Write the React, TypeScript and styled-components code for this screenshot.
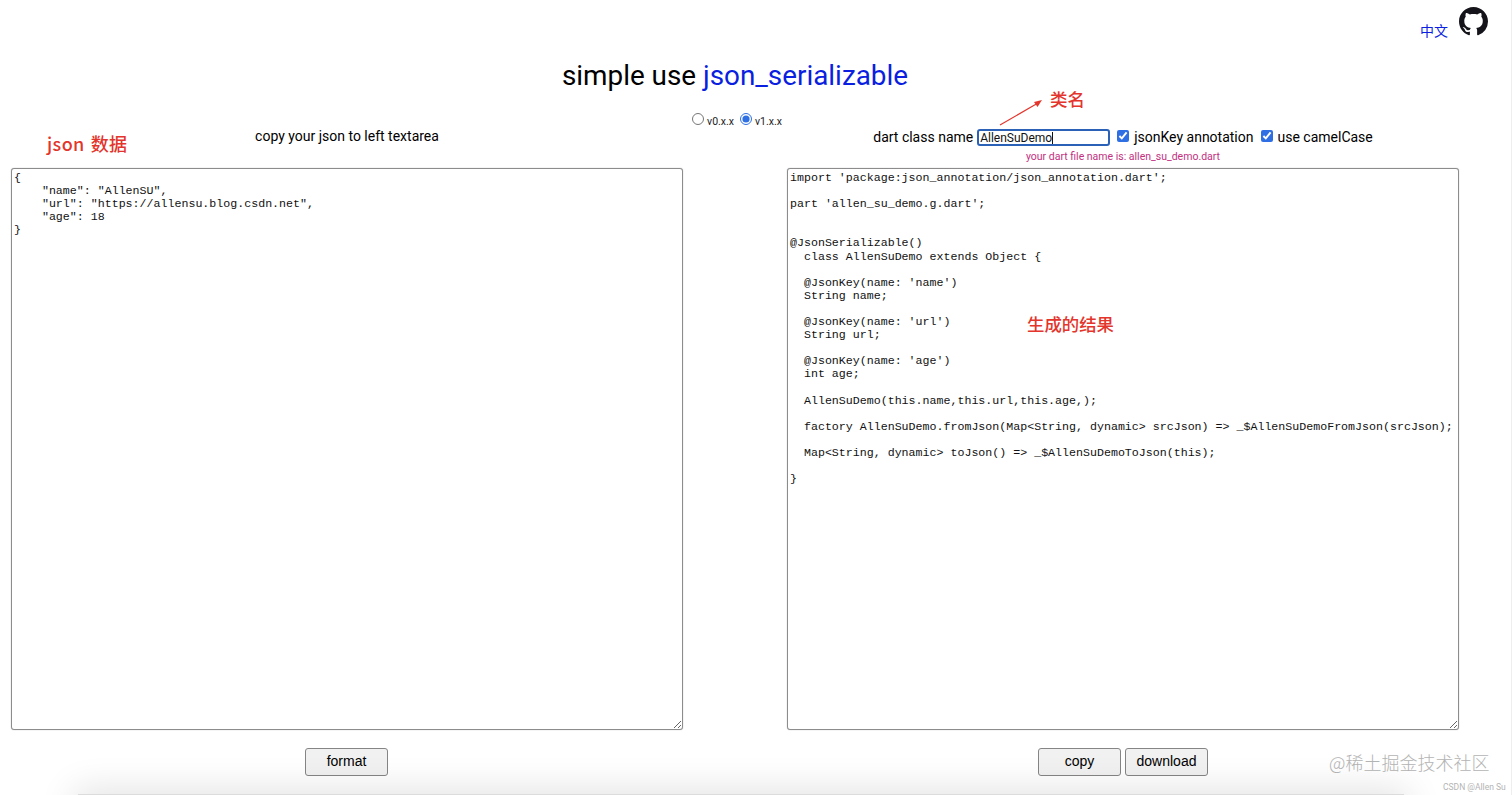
import React from "react";
import styled, { createGlobalStyle } from "styled-components";

const Global = createGlobalStyle`
  html, body { margin: 0; padding: 0; background: #fff; }
  body { font-family: Roboto, "Liberation Sans", sans-serif; color: #000; }
`;

const Page = styled.div`
  position: relative;
  width: 1512px;
  height: 795px;
  box-sizing: border-box;
  border-right: 1px solid #eeeeee;
  overflow: hidden;
`;

const TopBar = styled.div`
  display: flex;
  justify-content: flex-end;
  align-items: flex-end;
  gap: 11px;
  height: 36px;
  padding: 7px 23px 0 0;
  box-sizing: border-box;
`;

const LangLink = styled.a`
  font-size: 14px;
  line-height: 16px;
  color: #0a1fe0;
  text-decoration: none;
  font-family: "Noto Sans CJK SC", Roboto, sans-serif;
  margin-bottom: -2px;
`;

const GithubMark = styled.svg`
  width: 29px;
  height: 29px;
  fill: #14141a;
  display: block;
`;

const Main = styled.div`
  width: 1470px;
`;

const Title = styled.h1`
  margin: 23px 0 0;
  height: 34px;
  font-size: 27.85px;
  line-height: 34px;
  font-weight: 400;
  text-align: center;
`;

const TitleLink = styled.a`
  color: #0a1fe0;
  text-decoration: none;
`;

const VersionRow = styled.div`
  display: flex;
  justify-content: center;
  align-items: center;
  gap: 6px;
  height: 14px;
  margin-top: 20px;
  padding-left: 4px;
  font-size: 10.5px;
  color: #222;
`;

const VersionLabel = styled.label`
  display: flex;
  align-items: center;
  gap: 3px;
  padding-top: 2px;
`;

const Radio = styled.input`
  margin: 0 0 4px;
  width: 12px;
  height: 12px;
  accent-color: #2f6fe4;
`;

const Columns = styled.div`
  display: flex;
  gap: 104px;
  padding-left: 11px;
  margin-top: 2px;
`;

const Column = styled.section`
  display: flex;
  flex-direction: column;
  width: 672px;
`;

const ColumnHead = styled.div<{ $raised?: boolean }>`
  display: flex;
  justify-content: center;
  align-items: center;
  box-sizing: border-box;
  height: 17px;
  padding-bottom: ${(p) => (p.$raised ? "2px" : "0")};
  white-space: nowrap;
  font-size: 14px;
  line-height: 17px;
`;

const Hint = styled.div`
  height: 22px;
  font-size: 10.5px;
  line-height: 22px;
  text-align: center;
  color: #c2307f;
`;

const InputWrap = styled.span`
  position: relative;
  display: block;
  margin: 0 7px 0 4px;
`;

const ClassInput = styled.input`
  display: block;
  box-sizing: border-box;
  width: 133px;
  height: 17px;
  padding: 0 1px;
  border: 2px solid #2b62b8;
  border-radius: 3px;
  outline: none;
  font: 400 12px Roboto, sans-serif;
  color: #111;
`;

const Caret = styled.span`
  position: absolute;
  left: 75px;
  top: 3px;
  width: 1px;
  height: 12px;
  background: #111;
`;

const Check = styled.input`
  width: 12px;
  height: 12px;
  margin: 0 5px 3px 0;
  accent-color: #2f6fe4;
`;

const CheckLabel = styled.label`
  display: flex;
  align-items: center;
  margin-right: 7px;
  &:last-child { margin-right: 0; }
`;

const Code = styled.textarea`
  box-sizing: border-box;
  width: 672px;
  height: 562px;
  padding: 2px;
  border: 1px solid #8c8c8c;
  border-radius: 3px;
  box-shadow: 0 0 1px #9a9a9a;
  outline: none;
  resize: vertical;
  white-space: pre;
  overflow: hidden;
  font-family: "Liberation Mono", monospace;
  font-size: 11.63px;
  line-height: 13.1px;
  color: #111;
`;

const Actions = styled.div<{ $nudge?: boolean }>`
  display: flex;
  justify-content: center;
  gap: 4px;
  margin-top: 18px;
  padding-right: ${(p) => (p.$nudge ? "1px" : "0")};
`;

const ActionButton = styled.button`
  box-sizing: border-box;
  width: 83px;
  height: 28px;
  padding: 0 0 2px;
  background: #f1f1f1;
  border: 1px solid #858585;
  border-radius: 3px;
  font-family: "Liberation Sans", Arial, sans-serif;
  font-size: 14px;
  color: #000;
`;

const Note = styled.div<{ $x: number; $y: number; $size: number; $spacing?: number; $word?: number }>`
  position: absolute;
  left: ${(p) => p.$x}px;
  top: ${(p) => p.$y}px;
  font-family: "Noto Sans CJK SC", sans-serif;
  font-size: ${(p) => p.$size}px;
  letter-spacing: ${(p) => p.$spacing ?? 0}px;
  word-spacing: ${(p) => p.$word ?? 0}px;
  line-height: 1.2;
  font-weight: 500;
  color: #e3352c;
  white-space: nowrap;
`;

const Arrow = styled.svg`
  position: absolute;
  left: 996px;
  top: 96px;
  width: 50px;
  height: 32px;
`;

const Watermark = styled.div`
  position: absolute;
  left: 1329px;
  top: 751px;
  font-family: "Noto Sans CJK SC", sans-serif;
  font-weight: 300;
  font-size: 18px;
  line-height: 22px;
  color: #b4b4b4;
  white-space: nowrap;
`;

const Credit = styled.div`
  position: absolute;
  left: 1443px;
  top: 782px;
  font-family: Roboto, sans-serif;
  font-size: 8.5px;
  line-height: 10px;
  color: #b4b4b4;
  white-space: nowrap;
`;

const BottomShadow = styled.div`
  position: absolute;
  left: 78px;
  width: 1326px;
  top: 794px;
  height: 30px;
  background: #dcdcdc;
  box-shadow: 0 0 36px 4px rgba(0, 0, 0, 0.12);
`;

const jsonText = `{
    "name": "AllenSU",
    "url": "https://allensu.blog.csdn.net",
    "age": 18
}`;

const dartText = `import 'package:json_annotation/json_annotation.dart';

part 'allen_su_demo.g.dart';


@JsonSerializable()
  class AllenSuDemo extends Object {

  @JsonKey(name: 'name')
  String name;

  @JsonKey(name: 'url')
  String url;

  @JsonKey(name: 'age')
  int age;

  AllenSuDemo(this.name,this.url,this.age,);

  factory AllenSuDemo.fromJson(Map<String, dynamic> srcJson) => _$AllenSuDemoFromJson(srcJson);

  Map<String, dynamic> toJson() => _$AllenSuDemoToJson(this);

}`;

export default function App() {
  return (
    <Page>
      <Global />
      <TopBar>
        <LangLink href="#">中文</LangLink>
        <GithubMark viewBox="0 0 16 16" aria-label="GitHub">
          <path d="M8 0C3.58 0 0 3.58 0 8c0 3.54 2.29 6.53 5.47 7.59.4.07.55-.17.55-.38 0-.19-.01-.82-.01-1.49-2.01.37-2.53-.49-2.69-.94-.09-.23-.48-.94-.82-1.13-.28-.15-.68-.52-.01-.53.63-.01 1.08.58 1.23.82.72 1.21 1.87.87 2.33.66.07-.52.28-.87.51-1.07-1.78-.2-3.64-.89-3.64-3.95 0-.87.31-1.59.82-2.15-.08-.2-.36-1.02.08-2.12 0 0 .67-.21 2.2.82.64-.18 1.32-.27 2-.27s1.36.09 2 .27c1.53-1.04 2.2-.82 2.2-.82.44 1.1.16 1.92.08 2.12.51.56.82 1.27.82 2.15 0 3.07-1.87 3.75-3.65 3.95.29.25.54.73.54 1.48 0 1.07-.01 1.93-.01 2.2 0 .21.15.46.55.38A8.01 8.01 0 0 0 16 8c0-4.42-3.58-8-8-8z" />
        </GithubMark>
      </TopBar>
      <Main>
        <Title>
          simple use <TitleLink href="#">json_serializable</TitleLink>
        </Title>
        <VersionRow>
          <VersionLabel>
            <Radio type="radio" name="version" />
            v0.x.x
          </VersionLabel>
          <VersionLabel>
            <Radio type="radio" name="version" defaultChecked />
            v1.x.x
          </VersionLabel>
        </VersionRow>
        <Columns>
          <Column>
            <ColumnHead $raised>copy your json to left textarea</ColumnHead>
            <Hint />
            <Code defaultValue={jsonText} spellCheck={false} />
            <Actions $nudge>
              <ActionButton>format</ActionButton>
            </Actions>
          </Column>
          <Column>
            <ColumnHead>
              dart class name
              <InputWrap>
                <ClassInput defaultValue="AllenSuDemo" />
                <Caret />
              </InputWrap>
              <CheckLabel>
                <Check type="checkbox" defaultChecked />
                jsonKey annotation
              </CheckLabel>
              <CheckLabel>
                <Check type="checkbox" defaultChecked />
                use camelCase
              </CheckLabel>
            </ColumnHead>
            <Hint>your dart file name is: allen_su_demo.dart</Hint>
            <Code defaultValue={dartText} spellCheck={false} />
            <Actions>
              <ActionButton>copy</ActionButton>
              <ActionButton>download</ActionButton>
            </Actions>
          </Column>
        </Columns>
      </Main>
      <Note $x={47} $y={133} $size={18} $spacing={0.4} $word={1.5}>json 数据</Note>
      <Note $x={1050} $y={88} $size={17.5}>类名</Note>
      <Note $x={1027} $y={314} $size={17.4}>生成的结果</Note>
      <Arrow viewBox="0 0 50 32">
        <path d="M4 29 L42 7" stroke="#e3352c" strokeWidth="1.2" fill="none" />
        <path d="M46 4 L38 6 L41.5 11 Z" fill="#e3352c" />
      </Arrow>
      <Watermark>@稀土掘金技术社区</Watermark>
      <Credit>CSDN @Allen Su</Credit>
      <BottomShadow />
    </Page>
  );
}
